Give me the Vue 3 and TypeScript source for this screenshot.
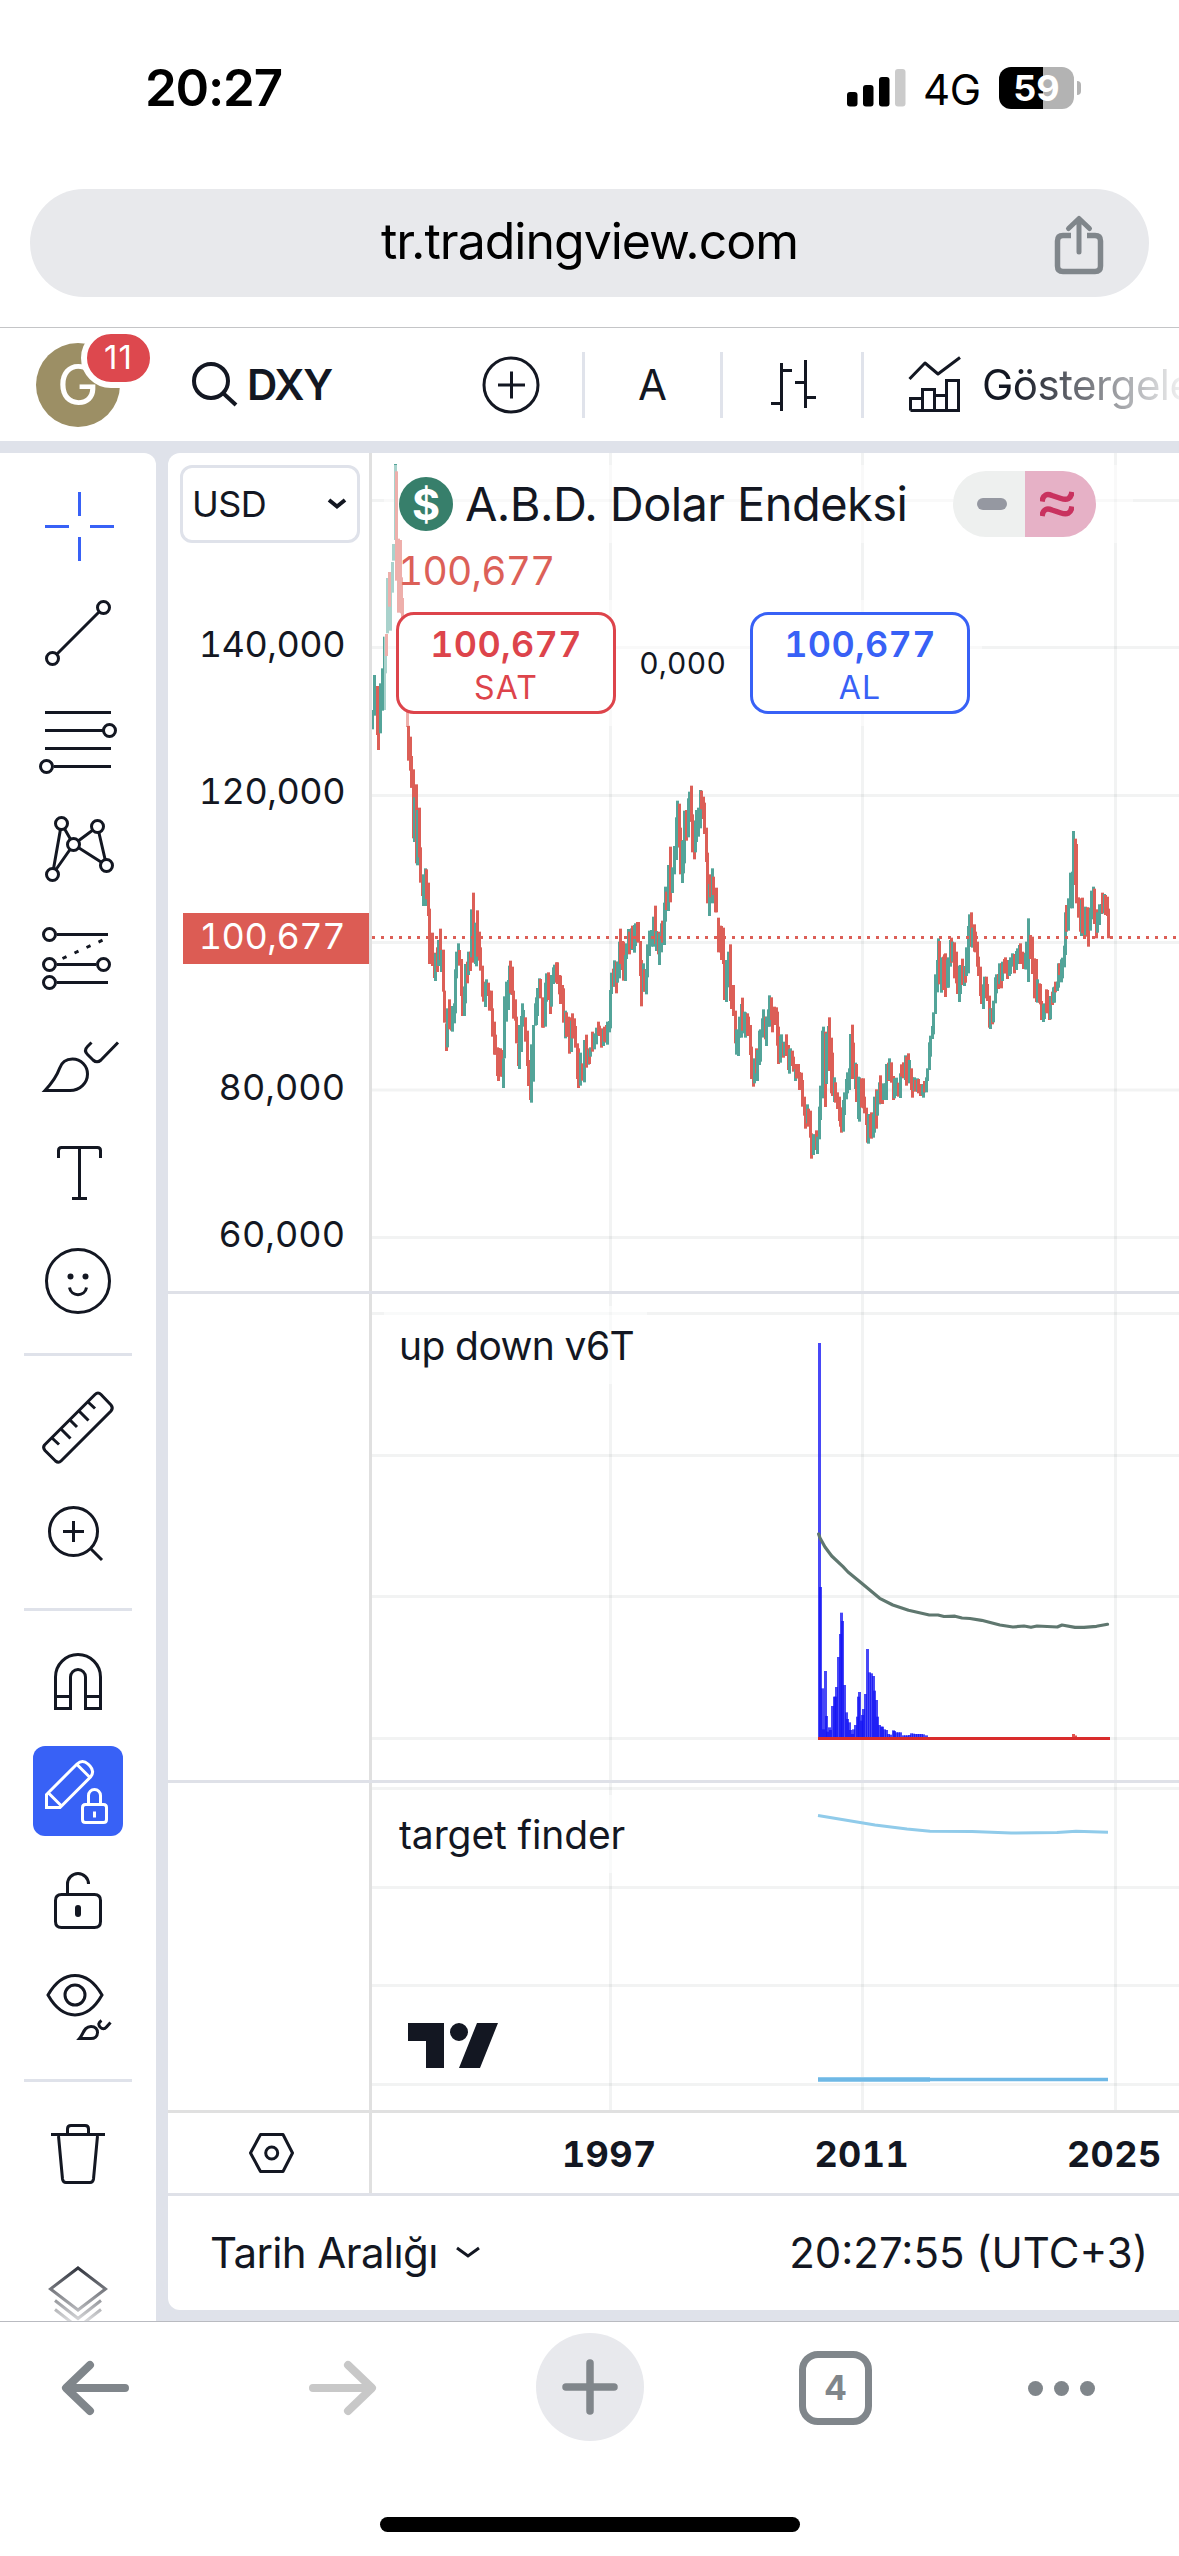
<script setup lang="ts">
interface Tool {
  id: string
  y: number
  h: number
  paths?: string[]
  dots?: [number, number][]
}

const tools: Tool[] = [
  { id: 'cross', y: 472, h: 108, paths: ['M79.5 492V516M79.5 537V561M45 526.5H69M90 526.5H114'] },
  { id: 'trend', y: 580, h: 108, paths: ['M52.5 658.5L103.5 607.5'], dots: [[52.5, 658.5], [103.5, 607.5]] },
  { id: 'fib', y: 688, h: 108, paths: ['M45 712.5H111M45 730.5H103M45 748.5H111M54 766.5H111'], dots: [[109.5, 730.5], [46.5, 766.5]] },
  {
    id: 'pattern', y: 796, h: 108,
    paths: ['M61.5 823.5L52.5 874.5L73.5 844.5ZM73.5 844.5L97.5 826.5L106.5 865.5Z'],
    dots: [[61.5, 823.5], [97.5, 826.5], [73.5, 844.5], [52.5, 874.5], [106.5, 865.5]],
  },
  { id: 'forecast', y: 904, h: 108, paths: ['M57 934.5H108M57 964.5H96M57 982.5H108'], dots: [[49.5, 934.5], [49.5, 964.5], [103.5, 964.5], [49.5, 982.5]] },
  {
    id: 'brush', y: 1012, h: 108,
    paths: [
      'M45 1090.5H70C80 1090.5 87.5 1083 87.5 1074C87.5 1066 81 1059 72.5 1059C66 1059 61.5 1062.5 59.5 1068.5C56.5 1077 51 1084 45 1090.5Z',
      'M91.5 1042.5L87.5 1046.5Q83.5 1050.5 87.5 1054.5L93 1060Q97 1063.5 101 1060L118 1042.5',
    ],
  },
  { id: 'text', y: 1120, h: 108, paths: ['M58.5 1158V1150.5Q58.5 1147.5 61.5 1147.5H97.5Q100.5 1147.5 100.5 1150.5V1158M79.5 1147.5V1198.5M72 1198.5H87'] },
  { id: 'smile', y: 1228, h: 108, paths: ['M46.5 1281A31.5 31.5 0 0 1 109.5 1281A31.5 31.5 0 0 1 46.5 1281ZM69.5 1287.5C71 1297 85 1297 86.5 1287.5'] },
  { id: 'sep', y: 1336, h: 37 },
  {
    id: 'ruler', y: 1373, h: 108,
    paths: [
      'M44.5 1445L95 1394.5Q98 1391.5 101 1394.5L111 1405Q113.5 1408 111 1411L61 1461Q58.5 1463.5 55.5 1461L45 1450.5Q42.5 1447.5 44.5 1445Z',
      'M52 1438L59 1444.5M61 1429L70.5 1438.5M70 1420L77 1427M79 1411L88.5 1420.5M88 1402L95 1408.5',
    ],
  },
  { id: 'zoom', y: 1481, h: 108, paths: ['M49.5 1531.5A24 24 0 0 1 97.5 1531.5A24 24 0 0 1 49.5 1531.5ZM63 1531.5H84M73.5 1521V1542M91 1549L102 1560'] },
  { id: 'sep', y: 1589, h: 41 },
  { id: 'magnet', y: 1630, h: 107, paths: ['M55.5 1708.5V1677A22.5 22.5 0 0 1 100.5 1677V1708.5H85.5V1677A7.5 7.5 0 0 0 70.5 1677V1708.5ZM55.5 1696.5H70.5M85.5 1696.5H100.5'] },
  {
    id: 'pencil', y: 1737, h: 108,
    paths: [
      'M46.5 1807.5V1794.5L77 1764Q82.5 1759 88 1764L90 1766Q95 1771.500 90.5 1777L60 1807.5ZM48.500 1793L61.5 1806M77 1764.500L90 1777.500',
      'M85.5 1804.500H103.5Q106.500 1804.500 106.500 1807.500V1819.500Q106.500 1822.500 103.500 1822.500H85.500Q82.500 1822.500 82.500 1819.500V1807.500Q82.500 1804.500 85.500 1804.500ZM88.500 1804V1795.500A6 6 0 0 1 100.500 1795.500V1804M94.500 1811.500V1817.500',
    ],
  },
  { id: 'lock', y: 1845, h: 108, paths: ['M61.5 1894.5H94.5Q100.5 1894.5 100.5 1900.5V1921.5Q100.5 1927.5 94.5 1927.5H61.5Q55.5 1927.5 55.5 1921.5V1900.5Q55.5 1894.5 61.5 1894.5ZM67.5 1894V1884A10.5 10.5 0 0 1 88.5 1884'] },
  {
    id: 'eye', y: 1953, h: 108,
    paths: [
      'M48 1995C63 1969 87 1969 102 1995C87 2021.5 63 2021.5 48 1995ZM65 1995A10 10 0 0 1 85 1995A10 10 0 0 1 65 1995Z',
      'M79.5 2038.5C83.500 2034 84 2026.5 91 2026.5C95.500 2026.5 97.500 2029.500 97.500 2032.500C97.500 2036.500 94.500 2038.500 91 2038.500ZM101.500 2020.500Q97 2023.500 100 2027Q103.500 2030.500 106.500 2027L110.500 2022.500',
    ],
  },
  { id: 'sep', y: 2061, h: 39 },
  { id: 'trash', y: 2100, h: 108, paths: ['M51 2134.5H105M67.5 2133V2129Q67.5 2125.5 71 2125.5H85Q88.5 2125.5 88.5 2129V2133M58.5 2136L62.5 2179Q63 2182.5 66 2182.5H90Q93 2182.5 93.5 2179L97.5 2136'] },
  { id: 'layers', y: 2208, h: 113, paths: ['M78 2268L105.5 2289L78 2310L50.5 2289ZM55 2300.500L78 2318.500L101 2300.500M55 2309.500L78 2327.500L101 2309.500'] },
]

interface Bar { x: number; y: number; h: number; up: boolean }

/* Monthly ranges: direction, offset, high, low (thirds of a pixel). */
const history = `g38,810,868 g43,705,827 r52,738,885 r56,750,930 g61,730,880 g67,685,812 g72,590,810 g75,600,700 r80,582,648 g83,414,580 g91,400,572 r88,396,500 g97,366,458 g101,312,362 g107,72,300 r110,94,422 r116,296,518 r122,300,495 r124,412,520 r128,474,600 r133,540,700 r138,620,780 r143,740,860 r145,857,962 r151,890,992 r155,948,1043`
const middle = `r160,28,235 r155,-12,83 g163,112,246 r169,73,310 g173,150,316 r178,143,292 r182,262,368 r187,345,408 g190,343,438 g196,325,438 r199,328,418 r205,368,468 r209,446,612 r216,518,618 r223,578,654 g226,580,663 r232,562,636 g236,540,618 r241,506,600 g244,570,636 r250,569,695 r254,692,788 r260,790,873 g262,745,862 r268,718,808 r273,742,812 g278,738,815 g282,730,790 g286,628,760 g290,575,655 g295,550,600 r299,570,617 r304,597,708 r308,680,768 g313,680,768 g317,612,730 r322,605,670 g326,575,645 r331,575,633 g335,448,592 r340,398,608 g346,488,612 g349,520,619 r352,451,590 r357,515,602 r362,562,632 r367,617,710 r371,665,725 g376,668,741 g380,658,700 r385,668,708 r389,692,752 r394,692,752 r398,745,830 r403,785,884 r407,824,884 r412,862,948 r416,864,963 r421,865,950 r426,870,950 g430,895,984 g434,709,895 g440,665,785 g444,660,750 g448,617,704 r451,602,700 r456,620,705 r460,692,776 r465,718,782 r469,770,850 r474,850,918 g478,795,927 g483,768,876 g488,730,800 g491,750,790 r496,772,845 r501,812,918 r505,900,978 r510,900,1020 g514,853,1028 g520,795,965 g525,730,797 g529,712,795 g533,684,768 g538,655,712 r542,657,715 r547,712,803 r551,714,803 g556,668,800 g560,640,725 r564,637,720 r570,648,762 g574,645,740 g579,622,672 g584,614,665 r588,607,668 r592,607,672 r597,645,703 r602,647,732 r606,675,732 r610,685,788 g616,752,835 r620,757,830 r625,770,830 r629,772,881 g634,782,876 r637,760,835 r642,775,835 r646,798,863 r651,850,957 r655,865,984 g661,878,977 r666,910,962 g672,840,967 r679,824,923 g684,868,914 r688,865,912 g692,862,890 r698,815,875 g703,820,868 g709,803,853 r714,785,825 r719,797,828 r725,805,863 g729,808,858 r734,800,845 r738,795,848 g742,785,854 g747,783,817 g752,690,805 g755,638,702 r760,626,680 g763,601,680 r769,605,700 g773,605,668 g778,545,655 r781,506,612 r787,543,630 r791,545,662 g796,585,663 g800,550,597 g805,507,578 r808,515,583 g813,505,570 r817,497,567 g822,495,578 g827,490,558 r832,486,545 r836,486,548 r841,543,648 r845,600,739 g850,610,695 r853,628,695 g858,627,703 g863,553,652 g868,512,588 g873,510,560 g879,470,560 r886,437,552 g889,513,573 r895,515,583 g898,520,615 g903,490,577 r907,482,548 g912,428,555 g916,380,485 r920,395,450 g925,315,453 r932,260,427 g938,322,399 g943,258,343 g949,172,300 g952,122,262 r958,131,262 r962,203,343 g967,243,369 g971,240,340 g974,152,310 r980,150,242 g985,115,232 g989,95,185 r994,77,185 r998,163,277 r1003,182,298 g1006,182,277 g1010,150,246 g1016,143,230 g1021,90,205 r1024,92,148 r1029,110,177 r1033,128,222 r1040,203,306 r1043,278,430 g1048,372,468 r1051,343,412 g1057,325,430 r1060,350,405 r1065,390,457 r1070,383,457 r1075,473,577 r1080,497,577 r1085,498,600 r1090,503,612 r1094,605,720 g1099,600,726 g1104,575,682 r1110,553,723 r1115,675,747 r1120,675,768 r1126,752,850 g1130,808,884 g1135,810,888 g1139,770,833 g1144,732,833 r1147,713,812 g1152,755,820 g1156,757,833 r1161,760,827 r1166,770,828 r1170,795,885 r1175,860,957 r1180,900,980 g1184,895,970 r1189,865,940 g1192,870,963 g1198,812,915 g1202,808,905 g1206,775,832 g1211,748,832 r1215,770,838 g1219,770,858 g1224,748,800 g1228,706,800 r1233,712,780 r1238,745,817 r1243,740,795 r1248,742,795`
const recent = `r52,755,857 r56,800,912 g61,828,908 g65,823,860 r70,848,893 g74,845,887 r80,823,888 r84,855,930 g88,868,941 g92,865,918 r97,872,918 r101,890,935 g106,927,963 r110,912,955 r115,912,955 r119,936,990 r124,938,990 r128,960,1040 r133,1010,1067 r137,1035,1106 g142,1033,1090 r146,1046,1100 r151,1052,1133 r154,1120,1196 g160,1123,1185 g164,1123,1165 r169,1111,1170 g173,1130,1182 g178,1040,1138 g182,977,1080 g187,812,1015 g191,800,960 r196,815,1041 g200,820,972 g205,798,860 r209,772,933 r214,833,1000 r217,878,1008 g223,952,1026 r227,967,1028 r233,997,1047 r237,1010,1083 r241,1042,1100 r245,1045,1118 g250,1020,1115 g254,997,1065 g259,957,1018 g263,937,1000 g268,925,990 g272,822,950 r277,794,957 r281,848,950 g286,908,987 r290,912,1026 g295,950,1077 g299,952,1085 r304,955,1043 r309,955,1045 r314,1010,1060 r318,1043,1095 r322,1062,1148 g326,1062,1151 r331,1065,1133 r335,1057,1136 g340,1062,1133 g344,1010,1118 r350,988,1106 g353,992,1067 g358,967,1033 r362,946,1030 r367,972,1032 g371,970,1020 g376,970,1020 g380,912,1020 r385,908,963 g389,895,960 r394,907,968 r400,948,1020 g404,955,1015 g409,953,1008 r414,968,1010 g421,940,1014 r425,913,950 r430,907,955 g436,886,960 r440,890,977 r446,880,965 g449,900,970 r454,925,990 r458,952,1013 g463,952,993 r467,960,995 g471,955,995 r475,957,1000 r482,972,1008 g486,975,1005 g490,972,1013 r494,963,997 g499,952,997 g503,925,963 g508,847,930 g512,827,890 g517,798,837 g521,757,823 g526,643,762 g531,600,697 g535,535,645 r538,543,673 g544,592,698 r549,590,690 r552,583,685 r556,580,711 g561,598,683 g566,592,683 g570,540,620 r573,533,608 g578,545,605 r583,547,655 r588,575,670 r592,640,702 g598,617,726 g602,615,702 r607,596,675 g612,618,678 r616,620,668 g620,562,648 g625,498,640 g629,463,560 r634,457,560 g638,503,563 r643,493,575 r647,515,577 r652,545,620 r655,590,648 r660,620,708 r664,675,732 g670,673,747 g674,650,712 r679,650,715 r683,672,723 r688,707,803 g692,745,807 r696,745,793 g700,722,787 g706,652,730 g710,643,700 r715,642,687 g719,610,672 r724,610,685 g727,605,663 r732,597,640 r737,592,640 r742,600,657 g747,600,648 g752,592,642 g756,580,620 r763,582,640 g768,573,630 g773,565,612 g777,555,597 r781,550,612 r786,575,612 r790,578,627 g796,580,628 g800,545,628 g805,475,666 r811,525,597 r817,530,642 r824,595,715 r828,597,726 g832,658,728 r837,670,728 r841,672,733 r845,723,780 g850,733,786 g854,730,777 r858,688,758 r863,690,760 r868,710,780 g872,708,778 r876,695,735 g880,682,728 g884,680,728 r887,665,697 g892,665,693 g896,610,683 r897,610,645 g903,598,667 g908,593,655 g912,557,622 g916,457,585 r920,435,515 g925,415,512 g932,338,445 g937,335,445 g941,213,375 r946,236,375 r950,252,430 r955,412,473 r960,415,515 g965,420,528 r968,413,520 r973,480,537 g977,440,525 r982,442,530 r986,443,560 g991,445,512 g995,392,478 g1000,380,475 r1004,386,492 r1009,448,535 g1013,457,518 g1019,433,495 g1023,432,462 r1028,398,460 g1033,402,460 r1037,405,465 r1041,410,468 r1046,446,535`

function readBars(src: string, x0: number, y0: number): Bar[] {
  return src.split(' ').map((item) => {
    const [x, hi, lo] = item.slice(1).split(',').map(Number)
    return { x: Math.round(x0 + x / 3 - 1.5), y: y0 + hi / 3, h: (lo - hi) / 3, up: item[0] === 'g' }
  })
}

const bars: Bar[] = [
  ...readBars(history, 360, 440),
  ...readBars(middle, 360, 760),
  ...readBars(recent, 760, 760),
]

const volume: [number, number][] = [
  [882, 921], [885, 1225], [888, 1348], [891, 1173], [893, 1308], [896, 1355], [899, 1342], [902, 1350], [905, 1278],
  [908, 1250], [911, 1250], [913, 1221], [916, 1131], [920, 1062], [922, 998], [925, 1023], [928, 1215], [931, 1297],
  [934, 1317], [937, 1327], [940, 1350], [943, 1362], [946, 1348], [949, 1335], [952, 1310], [955, 1250], [956, 1236],
  [960, 1322], [962, 1305], [965, 1287], [968, 1242], [972, 1107], [976, 1177], [979, 1180], [983, 1188], [986, 1232],
  [989, 1260], [992, 1310], [995, 1335], [998, 1340], [1001, 1340], [1004, 1348], [1008, 1350], [1012, 1362], [1016, 1364],
  [1021, 1351], [1024, 1353], [1028, 1357], [1032, 1357], [1036, 1357], [1040, 1366], [1044, 1366], [1048, 1366], [1052, 1365],
  [1056, 1360], [1060, 1361], [1064, 1362], [1068, 1362], [1072, 1362], [1076, 1362], [1080, 1363], [1084, 1366],
]

const prices = ['140,000', '120,000', '100,677', '80,000', '60,000']
const priceTops = [617.5, 765, 909.5, 1060.5, 1207.5]
const gridX = [610.5, 862.5, 1115.5]
</script>

<template>
  <div class="screen">
    <header class="status">
      <span class="clock">20:27</span>
      <div class="signals">
        <svg class="bars" width="60" height="42" viewBox="845 67 60 42">
          <rect x="846" y="92" width="10.500" height="14.500" rx="3" />
          <rect x="862" y="85" width="10.500" height="21.500" rx="3" />
          <rect x="878" y="77" width="10.500" height="29.500" rx="3" />
          <rect x="894" y="69" width="10.500" height="37.500" rx="3" fill="#cbcbcb" />
        </svg>
        <span class="net">4G</span>
        <span class="battery"><b>59</b></span>
        <i class="nub"></i>
      </div>
    </header>

    <div class="address">
      <div class="pill">
        <span class="url">tr.tradingview.com</span>
        <svg class="share" width="56" height="64" viewBox="1051 213 56 64" fill="none" stroke="#80868b" stroke-width="5.500">
          <path d="M1071 235.500H1063Q1057.500 235.500 1057.500 241V266Q1057.500 271.500 1063 271.500H1095Q1100.500 271.500 1100.500 266V241Q1100.500 235.500 1095 235.500H1087" />
          <path d="M1079 252V220M1068.500 228.500L1079 218.500L1089.500 228.500" stroke-width="5" stroke-linecap="round" stroke-linejoin="round" />
        </svg>
      </div>
    </div>

    <div class="topbar">
      <div class="avatar">G<span class="badge">11</span></div>
      <div class="symbol">
        <svg width="50" height="50" viewBox="188 360 50 50" fill="none" stroke="#131722" stroke-width="4">
          <circle cx="210" cy="381" r="17" /><path d="M222.500 393.500L235 405" />
        </svg>
        <span>DXY</span>
      </div>
      <svg class="plus" width="60" height="60" viewBox="481 355.500 60 60" fill="none" stroke="#131722" stroke-width="3">
        <circle cx="511" cy="385.500" r="27" /><path d="M498 385.500H525M511.500 372V399" />
      </svg>
      <i class="vsep"></i>
      <span class="interval">A</span>
      <i class="vsep"></i>
      <svg class="candleicon" width="60" height="60" viewBox="764 355 60 60" fill="none" stroke="#131722" stroke-width="3">
        <path d="M781.500 363V411M771 403.500H780M783 370.500H792M805.500 360V408M795 382.500H804M807 397.500H816" />
      </svg>
      <i class="vsep"></i>
      <svg class="indicon" width="60" height="60" viewBox="904 354 60 60" fill="none" stroke="#131722" stroke-width="3">
        <path d="M909.500 378L925 362L938 373L960 356.500" stroke-linejoin="round" />
        <path d="M910.500 409.500V397.500H922.500V388.500H934.500V409.500M922.500 397.500V409.500M934.500 394.500H946.500V379.500H958.500V409.500H910.500M946.500 394.500V409.500" />
      </svg>
      <span class="indicators">Göstergeler</span>
    </div>

    <div class="workspace">
      <aside class="tools">
        <template v-for="(t, i) in tools" :key="i">
          <div v-if="t.id === 'sep'" class="hsep" :style="{ height: t.h + 'px' }"><i></i></div>
          <svg v-else :class="['tool', t.id]" width="156" :height="t.h" :viewBox="`0 ${t.y} 156 ${t.h}`" fill="none" stroke-width="3">
            <rect v-if="t.id === 'pencil'" x="33" y="1746" width="90" height="90" rx="12" fill="#3861f6" stroke="none" />
            <path v-for="p in t.paths" :key="p" :d="p" />
            <circle v-for="d in t.dots" :key="d.join()" :cx="d[0]" :cy="d[1]" r="6" fill="#fff" />
            <path v-if="t.id === 'forecast'" d="M62.500 958.500L104 939.500" stroke-dasharray="4.400 8.800" />
            <g v-if="t.id === 'smile'" fill="#131722" stroke="none">
              <circle cx="70.500" cy="1276.500" r="3" /><circle cx="85.500" cy="1276.500" r="3" />
            </g>
            <rect v-if="t.id === 'lock'" x="75" y="1905" width="6" height="12" rx="3" fill="#131722" stroke="none" />
          </svg>
        </template>
      </aside>

      <main class="chart">
        <section class="row main-row">
          <div class="axis">
            <div class="currency">
              <span>USD</span>
              <svg width="20" height="14" viewBox="0 0 20 14" fill="none" stroke="#131722" stroke-width="4"><path d="M2 3L10 9.500L18 3" /></svg>
            </div>
            <span
              v-for="(p, i) in prices"
              :key="p"
              :class="['price', { last: p === '100,677', short: p.length < 7 }]"
              :style="{ top: priceTops[i] - 453 + 'px' }"
            >{{ p }}</span>
          </div>
          <div class="pane">
            <svg class="plot" width="807" height="838" viewBox="372 453 807 838">
              <g stroke="#2a2e39" stroke-opacity=".06" stroke-width="3">
                <path v-for="x in gridX" :key="x" :d="`M${x} 453V1291`" />
                <path v-for="y in [500.5, 647.5, 795.5, 942.5, 1090, 1237.5]" :key="y" :d="`M372 ${y}H1179`" />
              </g>
              <rect v-for="(b, i) in bars" :key="i" :x="b.x" :y="b.y" width="3" :height="b.h" :fill="b.up ? '#53a499' : '#dc5f57'" />
              <path d="M372 937.500H1179" stroke="#dc5f57" stroke-width="3" stroke-dasharray="3 6" />
            </svg>
            <div class="legend">
              <div class="title">
                <span class="coin">$</span>
                <span class="name">A.B.D. Dolar Endeksi</span>
                <div class="toggle">
                  <div class="off"><i></i></div>
                  <div class="on">
                    <svg width="34" height="26" viewBox="1040 491 34 26" fill="none" stroke="#c9325f" stroke-width="5.500">
                      <path d="M1042 501.500C1043 494.500 1047 493.500 1052 495.500L1061 498.500C1067 500.500 1071 499 1072 492" />
                      <path d="M1042 516C1043 509 1047 508 1052 510L1061 513C1067 515 1071 513.500 1072 506.500" />
                    </svg>
                  </div>
                </div>
              </div>
              <div class="value">100,677</div>
              <div class="trade">
                <div class="deal sell"><b>100,677</b><span>SAT</span></div>
                <span class="spread">0,000</span>
                <div class="deal buy"><b>100,677</b><span>AL</span></div>
              </div>
            </div>
          </div>
        </section>

        <section class="row volume-row">
          <div class="axis"></div>
          <div class="pane">
            <svg class="plot" width="807" height="486" viewBox="372 1294 807 486">
              <g stroke="#2a2e39" stroke-opacity=".06" stroke-width="3">
                <path v-for="x in gridX" :key="x" :d="`M${x} 1294V1780`" />
                <path v-for="y in [1313.5, 1455.5, 1596.5, 1738.5]" :key="y" :d="`M372 ${y}H1179`" />
              </g>
              <g fill="#1414f5" fill-opacity=".78">
                <rect x="818" y="1343" width="3" height="395" />
                <rect v-for="v in volume" :key="v[0]" :x="Math.round(358.3 + v[0] / 1.9145)" :y="1280 + v[1] / 3" width="3" :height="(1375 - v[1]) / 3" />
              </g>
              <path d="M1072 1737V1734H1075V1735.500H1077V1737Z" fill="#e2544f" />
              <path d="M818 1738.500H1110" stroke="#d92c2c" stroke-width="3" />
              <path
                d="M818.600 1534L820 1538L825 1547L831.700 1556L843 1566.700L848 1572L861.400 1583L879.700 1598.300L892.800 1605L908.500 1610.300L929.300 1615L938 1615L944 1616.500L955 1616.200L962 1618L970 1618.500L981.600 1620.300L999.900 1625L1012.900 1627L1024 1626L1031 1627.300L1037 1626L1057.300 1627L1062 1625L1075 1627.300L1084 1627.300L1096.500 1626.300L1107.500 1624.300"
                fill="none" stroke="#5f776f" stroke-width="3.200" stroke-linejoin="round" stroke-linecap="round"
              />
            </svg>
            <div class="study">up down v6T</div>
          </div>
        </section>

        <section class="row target-row">
          <div class="axis"></div>
          <div class="pane">
            <svg class="plot" width="807" height="327" viewBox="372 1783 807 327">
              <g stroke="#2a2e39" stroke-opacity=".06" stroke-width="3">
                <path v-for="x in gridX" :key="x" :d="`M${x} 1783V2110`" />
                <path v-for="y in [1788.5, 1887.5, 1985.5, 2084.5]" :key="y" :d="`M372 ${y}H1179`" />
              </g>
              <path d="M818 1815.500L842 1819.500L875 1825L907 1829L930 1831.300L972 1831.500L1011 1833L1057 1832.500L1076 1831.300L1108 1832.300" fill="none" stroke="#90cbea" stroke-width="3" />
              <path d="M818 2079.500H930" stroke="#9dd0ee" stroke-width="5" />
              <path d="M818 2079.500H1108" stroke="#6fb8e5" stroke-width="3.600" />
              <path d="M408 2023H444V2068H426V2041H408ZM477 2023H498L480 2068H459ZM468 2032A9 9 0 0 1 450 2032A9 9 0 0 1 468 2032Z" fill="#131722" stroke="#fff" stroke-width="6" paint-order="stroke" />
            </svg>
            <div class="study target">target finder</div>
          </div>
        </section>

        <section class="row time-row">
          <div class="axis">
            <svg width="50" height="44" viewBox="247 2132 50 44" fill="none" stroke="#131722" stroke-width="3">
              <path d="M260.500 2135.500H283L292.500 2154L283 2172.500H260.500L250.500 2154Z" stroke-linejoin="round" /><circle cx="271.700" cy="2154" r="6" />
            </svg>
          </div>
          <div class="years">
            <span>1997</span><span>2011</span><span>2025</span>
          </div>
        </section>

        <footer class="range">
          <span class="range-label">Tarih Aralığı</span>
          <svg width="28" height="14" viewBox="0 0 28 14" fill="none" stroke="#131722" stroke-width="3"><path d="M3 3L14 11L25 3" /></svg>
          <span class="zone">20:27:55 (UTC+3)</span>
        </footer>
      </main>
    </div>

    <nav class="browser">
      <svg width="75" height="64" viewBox="58 2356 75 64" fill="none" stroke="#80868b" stroke-width="8" stroke-linecap="round" stroke-linejoin="round"><path d="M125 2388H67M90 2365L66 2388L90 2411" /></svg>
      <svg width="75" height="64" viewBox="305 2356 75 64" fill="none" stroke="#c8c8c8" stroke-width="8" stroke-linecap="round" stroke-linejoin="round"><path d="M313 2388H371M348 2365L372 2388L348 2411" /></svg>
      <div class="newtab">
        <svg width="60" height="60" viewBox="-30 -30 60 60" stroke="#80868b" stroke-width="7.500" stroke-linecap="round"><path d="M-24 0H24M0 -24V24" /></svg>
      </div>
      <div class="tabs">4</div>
      <div class="more"><i></i><i></i><i></i></div>
    </nav>
    <div class="home"><i></i></div>
  </div>
</template>

<style>
body { margin: 0; background: #fff; }
</style>

<style scoped>
.screen { width: 1179px; height: 2556px; overflow: hidden; background: #fff; color: #131722; font-family: Inter, "Liberation Sans", sans-serif; display: flex; flex-direction: column; }
.screen * { box-sizing: border-box; }
svg { display: block; flex: none; }
i { display: block; flex: none; }

.status { height: 189px; padding: 61px 98px 0 145px; display: flex; justify-content: space-between; align-items: flex-start; flex: none; color: #000; }
.clock { font-size: 51px; font-weight: 600; line-height: 54px; letter-spacing: -1.200px; }
.signals { display: flex; align-items: center; padding-top: 6px; height: 48px; }
.net { font-size: 42px; line-height: 42px; width: 56px; margin: 3px 20px 0 17px; letter-spacing: -.5px; white-space: nowrap; }
.battery { width: 75px; height: 42px; border-radius: 12px; background: linear-gradient(90deg, #000 44px, #b3b3b3 44px); color: #fff; font-size: 36px; line-height: 42px; text-align: center; }
.nub { width: 4px; height: 14px; margin-left: 3px; border-radius: 0 4px 4px 0; background: #b3b3b3; }

.address { height: 139px; padding: 0 30px; border-bottom: 1px solid #c4c5c7; flex: none; }
.pill { height: 108px; border-radius: 54px; background: #e8e9ec; display: flex; align-items: center; padding-left: 351px; padding-right: 42px; justify-content: space-between; color: #000; }
.url { font-size: 50px; line-height: 60px; letter-spacing: -1px; margin-top: -4px; }
.share { margin-top: 4px; }

.topbar { height: 113px; display: flex; align-items: center; flex: none; overflow: hidden; padding-left: 36px; font-size: 42px; }
.avatar { position: relative; width: 84px; height: 84px; border-radius: 50%; background: #9c8f65; color: #fff; font-size: 56px; line-height: 84px; text-align: center; flex: none; }
.badge { position: absolute; left: 45px; top: -15px; width: 75px; height: 60px; border: 6px solid #fff; border-radius: 30px; background: #dd484e; font-size: 33px; line-height: 47px; letter-spacing: 1px; }
.symbol { display: flex; align-items: center; width: 361px; margin-left: 69px; margin-right: -1px; font-weight: 600; flex: none; }
.symbol span { margin-left: 8px; letter-spacing: -1.200px; }
.vsep { width: 3px; height: 66px; background: #e0e3eb; flex: none; }
.plus { margin: 1px 41px 0 -68px; }
.interval { width: 135px; text-align: center; flex: none; }
.candleicon { margin: 0 37px 0 41px; }
.indicon { margin: 0 18px 0 40px; }
.indicators { white-space: nowrap; flex: none; width: 260px; letter-spacing: -.5px; line-height: 60px; -webkit-mask-image: linear-gradient(90deg, #000 30px, transparent 210px); mask-image: linear-gradient(90deg, #000 30px, transparent 210px); }

.workspace { height: 1881px; padding-top: 12px; background: #dfe2ea; border-bottom: 1px solid #b9bbc1; display: flex; gap: 12px; flex: none; }
.tools { width: 156px; height: 1868px; padding-top: 19px; background: #fff; border-top-right-radius: 12px; overflow: hidden; flex: none; }
.tool { stroke: #131722; }
.tool.cross { stroke: #3861f6; }
.tool.pencil { stroke: #fff; }
.tool.layers { -webkit-mask-image: linear-gradient(#000 50px, transparent 125px); mask-image: linear-gradient(#000 50px, transparent 125px); }
.hsep { display: flex; align-items: center; justify-content: center; }
.hsep i { width: 108px; height: 3px; background: #dfe2ea; }

.chart { width: 1011px; height: 1857px; background: #fff; border-radius: 12px 0 0 12px; overflow: hidden; flex: none; }
.row { display: flex; border-bottom: 3px solid #dfe1e8; }
.axis { width: 204px; border-right: 3px solid #e0e0e0; flex: none; position: relative; }
.pane { position: relative; width: 807px; flex: none; }
.main-row { height: 841px; }
.volume-row { height: 489px; }
.target-row { height: 330px; border-color: #e0e0e0; }
.time-row { height: 83px; }

.currency { width: 180px; height: 78px; margin: 12px 0 0 12px; border: 3px solid #dfe2ea; border-radius: 12px; display: flex; align-items: center; justify-content: space-between; padding: 0 10px 0 9px; font-size: 36px; }
.currency span { letter-spacing: -.6px; }
.price { position: absolute; right: 0; width: 186px; height: 51px; padding-right: 24px; font-size: 36px; line-height: 52px; letter-spacing: -.500px; text-align: right; font-variant-numeric: tabular-nums; }
.price.short { letter-spacing: 0; }
.price.last { background: #dc5c54; color: #fff; height: 51px; margin-top: 3px; line-height: 47px; }

.legend { position: absolute; left: 12px; top: 12px; }
.title { width: 749px; height: 78px; display: flex; align-items: center; padding-left: 15px; background: rgba(255, 255, 255, .5); }
.coin { width: 54px; height: 54px; border-radius: 50%; background: #377f6b; color: #fff; font-size: 43px; font-weight: 700; line-height: 54px; text-align: center; flex: none; }
.name { margin: -2px 0 0 12px; width: 487px; font-size: 47px; letter-spacing: -.580px; white-space: nowrap; flex: none; }
.toggle { width: 143px; height: 66px; border-radius: 33px; overflow: hidden; display: flex; flex: none; margin-left: 1px; }
.off { width: 72px; background: #eef0ef; display: flex; align-items: center; padding-left: 24px; }
.off i { width: 30px; height: 12px; border-radius: 6px; background: #9598a1; }
.on { width: 71px; background: #e6b1c6; display: flex; align-items: center; padding-left: 15px; }
.value { width: 180px; height: 57px; padding-left: 14px; font-size: 39px; line-height: 56px; letter-spacing: -.800px; color: #dc6058; font-variant-numeric: tabular-nums; background: rgba(255, 255, 255, .5); }
.trade { width: 598px; height: 126px; padding: 12px; display: flex; align-items: center; background: rgba(255, 255, 255, .5); }
.deal { width: 220px; height: 102px; border: 3px solid; border-radius: 18px; background: #fff; display: flex; flex-direction: column; align-items: center; padding-top: 7px; flex: none; }
.deal b { font-size: 36px; font-weight: 600; line-height: 44px; letter-spacing: .300px; font-variant-numeric: tabular-nums; }
.deal span { font-size: 32px; line-height: 43px; letter-spacing: 1.200px; }
.sell { color: #dd444b; }
.buy { color: #3861f6; }
.spread { width: 134px; text-align: center; font-size: 30px; letter-spacing: .8px; flex: none; }

.study { position: absolute; left: 12px; top: 12px; width: 263px; height: 78px; padding-left: 15px; background: rgba(255, 255, 255, .55); font-size: 39px; line-height: 79px; letter-spacing: -.600px; white-space: nowrap; }
.study.target { letter-spacing: -.100px; width: 255px; }

.time-row .axis { display: flex; align-items: center; padding-left: 79px; }
.years { display: flex; width: 807px; align-items: center; padding: 2px 0 0 111px; font-size: 36px; font-weight: 700; font-variant-numeric: tabular-nums; }
.years span { width: 252.500px; text-align: center; flex: none; letter-spacing: .4px; }

.range { height: 114px; padding: 0 31px 2px 42px; display: flex; align-items: center; font-size: 42px; }
.range-label { letter-spacing: -.600px; }
.range svg { margin-left: 16px; }
.zone { margin-left: auto; }

.browser { height: 132px; display: flex; align-items: center; padding-left: 58px; flex: none; }
.browser > svg:nth-child(2) { margin-left: 172px; }
.newtab { width: 108px; height: 108px; margin-left: 156px; margin-top: -2px; border-radius: 50%; background: #e8e9ed; display: flex; align-items: center; justify-content: center; }
.tabs { width: 73px; height: 74px; margin-left: 155px; border: 7px solid #80868b; border-radius: 19px; color: #80868b; font-size: 34px; font-weight: 700; line-height: 60px; text-align: center; }
.more { display: flex; gap: 11px; margin-left: 156px; }
.more i { width: 15px; height: 15px; border-radius: 50%; background: #80868b; }
.home { height: 102px; padding-top: 63px; display: flex; justify-content: center; flex: none; }
.home i { width: 420px; height: 15px; border-radius: 8px; background: #000; }
</style>
